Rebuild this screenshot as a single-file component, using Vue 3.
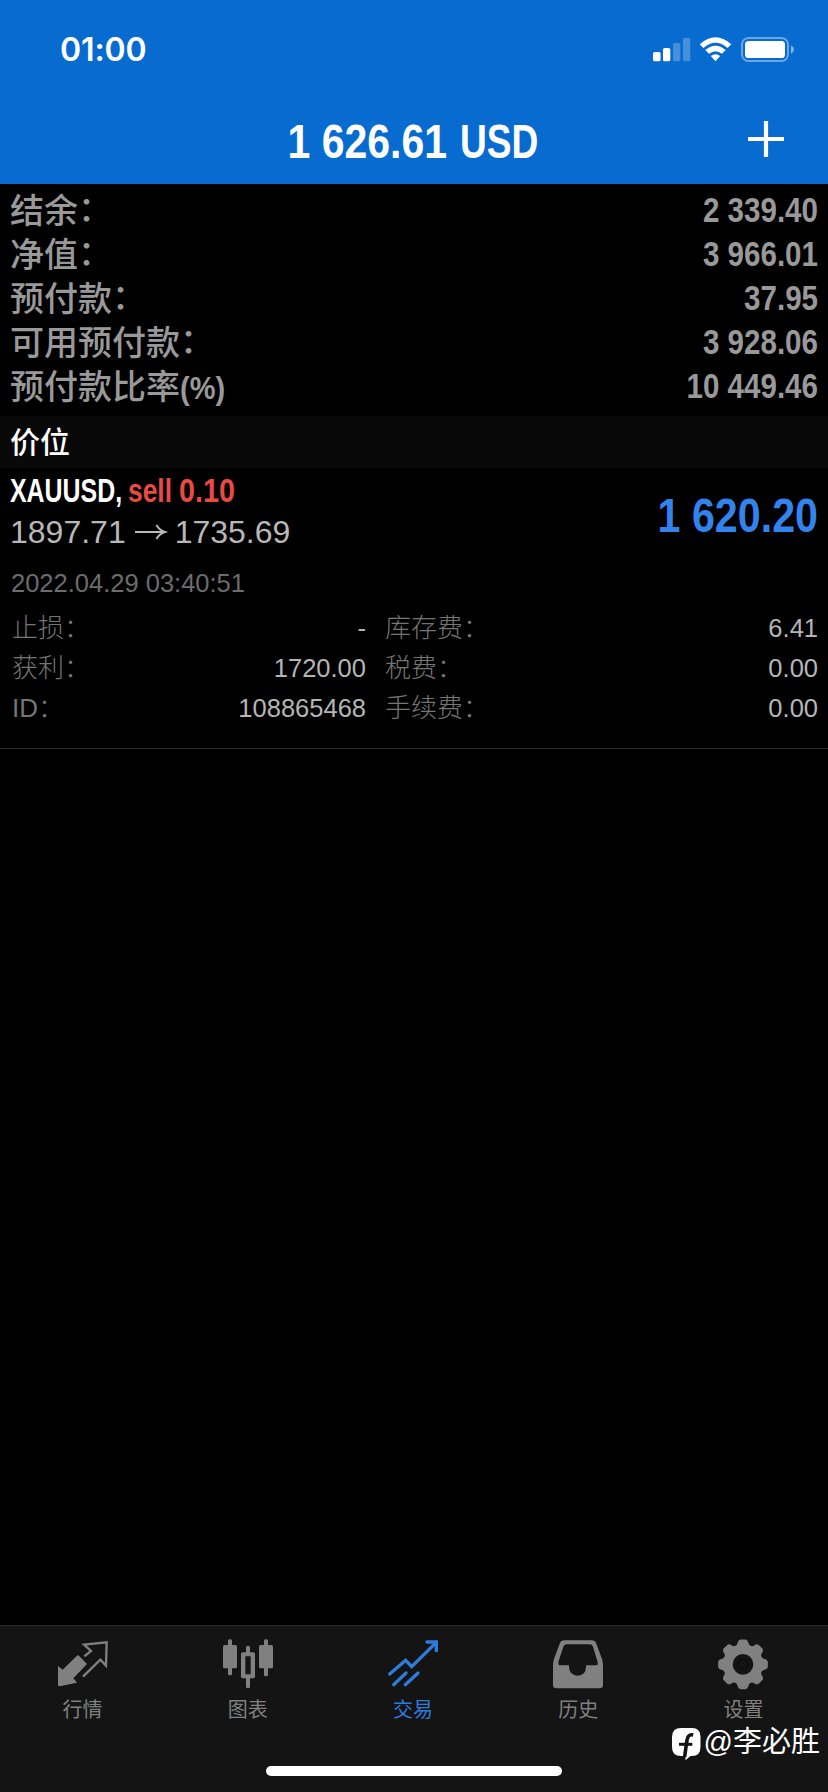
<script setup>
const account = [
  { label: '结余', suffix: '：', value: '2 339.40' },
  { label: '净值', suffix: '：', value: '3 966.01' },
  { label: '预付款', suffix: '：', value: '37.95' },
  { label: '可用预付款', suffix: '：', value: '3 928.06' },
  { label: '预付款比率', unit: '(%)', value: '10 449.46' },
]
const details = [
  ['止损：', '-', '库存费：', '6.41'],
  ['获利：', '1720.00', '税费：', '0.00'],
  ['ID：', '108865468', '手续费：', '0.00'],
]
const tabs = [
  { id: 'quotes', label: '行情' },
  { id: 'chart', label: '图表' },
  { id: 'trade', label: '交易' },
  { id: 'history', label: '历史' },
  { id: 'settings', label: '设置' },
]

// Eight rounded teeth around the centre of a 150-unit box.
function gearPath() {
  const at = (r, deg) => {
    const a = (deg * Math.PI) / 180
    return `${(75 + r * Math.cos(a)).toFixed(1)} ${(76 + r * Math.sin(a)).toFixed(1)}`
  }
  let d = `M${at(60, -22.5)}`
  for (let i = 0; i < 8; i++) {
    const c = i * 45
    d += `Q${at(60, c - 17)} ${at(67, c - 14)}Q${at(75, c - 11)} ${at(75, c - 6)}`
    d += `L${at(75, c + 6)}Q${at(75, c + 11)} ${at(67, c + 14)}Q${at(60, c + 17)} ${at(60, c + 22.5)}`
  }
  return d + 'Z'
}
const gear = gearPath()
</script>

<template>
  <div class="screen">
    <header class="header">
      <div class="status">
        <span class="time">01:00</span>
        <svg class="indicators" width="144" height="30" viewBox="652 35 144 30" fill="#fff">
          <rect x="653" y="52" width="7.5" height="9.3" rx="1.6" />
          <rect x="663" y="48" width="7.3" height="13.3" rx="1.6" />
          <g opacity=".25"><rect x="673" y="43" width="7.3" height="18.3" rx="1.6" /><rect x="683" y="38" width="7.3" height="23.3" rx="1.6" /></g>
          <path d="M699.7 44.2Q715.5 30.2 731.3 44.2L727.6 48Q715.5 37.3 703.4 48Z" />
          <path d="M705.3 50Q715.5 41.4 725.7 50L722 53.8Q715.5 48.6 709 53.8Z" />
          <path d="M710.8 56.1Q715.5 52.2 720.2 56.1L715.5 61.2Z" />
          <rect x="742" y="38" width="46" height="23" rx="6.5" fill="none" stroke="#fff" stroke-opacity=".4" stroke-width="2" />
          <rect x="745" y="41" width="40" height="17" rx="3.6" />
          <path d="M791 45.5Q794 47 794 49.5T791 53.8Z" opacity=".5" />
        </svg>
      </div>
      <div class="nav">
        <svg class="title condensed" width="256" height="50">
          <text transform="translate(1.5 42) scale(.845 1)">1 626.61</text>
          <text transform="translate(174 42) scale(.765 1)">USD</text>
        </svg>
        <svg class="plus" width="36" height="36" viewBox="0 0 36 36"><path d="M0 18H36M18 0V36" stroke="#fff" stroke-width="4.2" /></svg>
      </div>
    </header>

    <section class="account">
      <div v-for="row in account" :key="row.label" class="account-row">
        <div class="label">{{ row.label }}<span v-if="row.suffix" class="colon">{{ row.suffix }}</span><span v-if="row.unit" class="unit">{{ row.unit }}</span></div>
        <svg class="condensed amount" width="140" height="44">
          <text transform="translate(140 34) scale(.857 1)" text-anchor="end">{{ row.value }}</text>
        </svg>
      </div>
    </section>

    <h2 class="band">价位</h2>

    <section class="position">
      <div class="summary">
        <div>
          <svg class="condensed symbol" width="240" height="42">
            <text transform="translate(0 34) scale(.755 1)" fill="#fff">XAUUSD,</text>
            <text transform="translate(118 34) scale(.8 1)" fill="#e94b43">sell</text>
            <text transform="translate(169 34) scale(.87 1)" fill="#e94b43">0.10</text>
          </svg>
          <div class="prices">
            <span>1897.71</span>
            <svg width="31" height="18" viewBox="0 0 31 18" fill="none" stroke="#b8b8b8" stroke-width="2"><path d="M0 9H29.5M21.5 2Q24 7 30 9Q24 11 21.5 16" /></svg>
            <span>1735.69</span>
          </div>
        </div>
        <svg class="condensed profit" width="170" height="50">
          <text transform="translate(170 42) scale(.85 1)" text-anchor="end">1 620.20</text>
        </svg>
      </div>
      <div class="date">2022.04.29 03:40:51</div>
      <div class="details">
        <div v-for="row in details" :key="row[0]" class="detail-row">
          <div class="pair"><span class="key">{{ row[0] }}</span><span>{{ row[1] }}</span></div>
          <div class="pair"><span class="key">{{ row[2] }}</span><span>{{ row[3] }}</span></div>
        </div>
      </div>
    </section>

    <footer class="tabbar">
      <nav class="tabs">
        <div v-for="tab in tabs" :key="tab.id" class="tab" :class="{ active: tab.id === 'trade' }">
          <svg width="50" height="50" viewBox="0 0 150 150" fill="currentColor">
            <g v-if="tab.id === 'quotes'">
              <path d="M0 81L14 92L56 51Q60 47 64 51L87 75L46 118L57 131L5 142Q0 142 0 138Z" />
              <path d="M79 52L99 36L78 17L146 10L144 80L127 62L75 113" fill="none" stroke="currentColor" stroke-width="7" />
            </g>
            <g v-else-if="tab.id === 'chart'">
              <rect x="15" y="1" width="12" height="108" rx="5" /><rect x="0" y="18" width="42" height="70" rx="5" />
              <rect x="123" y="1" width="12" height="111" rx="5" /><rect x="108" y="18" width="42" height="70" rx="5" />
              <path d="M69 25Q69 20 75 20T81 25V40H91Q96 40 96 45V113Q96 118 91 118H81V143Q81 148 75 148T69 143V118H59Q54 118 54 113V45Q54 40 59 40H69ZM67 52V106H83V52Z" fill-rule="evenodd" />
            </g>
            <g v-else-if="tab.id === 'trade'" fill="none" stroke="currentColor" stroke-width="10" stroke-linecap="round">
              <path d="M5 105L53 64L71 83L142 13" stroke-linejoin="miter" />
              <path d="M117 9H145V35" />
              <path d="M17 137L54 102M52 137L90 102" />
            </g>
            <path v-else-if="tab.id === 'history'" fill-rule="evenodd" d="M35 4H116Q126 4 130 14L147 60Q150 69 150 79V138Q150 148 140 148H10Q0 148 0 138V79Q0 69 3 60L20 14Q24 4 35 4ZM41 16Q34 16 31 23L17 66Q14 79 21 79H48V84Q50 110 74 110T99 84V79H130Q137 79 133 66L120 23Q117 16 110 16Z" />
            <g v-else>
              <path fill-rule="evenodd" :d="gear + 'M44 76a31 31 0 1 0 62 0a31 31 0 1 0-62 0Z'" />
              <circle cx="75" cy="76" r="15" fill="none" stroke="#0b0b0b" stroke-width="4" />
            </g>
          </svg>
          <span>{{ tab.label }}</span>
        </div>
      </nav>
      <div class="home-bar"></div>
      <div class="watermark">
        <svg width="29" height="33" viewBox="0 0 29 33">
          <path d="M9 0H20Q28.5 0 28.5 9V19Q28.5 28 20 28H18.5L13.5 32.3V28H9Q0 28 0 19V9Q0 0 9 0Z" fill="#fff" />
          <path d="M21.2 7C17 6 15.6 8.5 14.9 12.5L12.6 29" fill="none" stroke="#141414" stroke-width="3.6" />
          <path d="M7 16.3H20.3" stroke="#141414" stroke-width="3" />
        </svg>
        <span>@李必胜</span>
      </div>
    </footer>
  </div>
</template>

<style>
body { background: #000; }
</style>

<style scoped>
.screen {
  width: 828px;
  height: 1792px;
  display: flex;
  flex-direction: column;
  background: #000;
  color: #fff;
  font-family: "Liberation Sans", "Noto Sans CJK SC", sans-serif;
  overflow: hidden;
}
svg { display: block; flex: none; overflow: visible; }
.header { height: 184px; background: #086bd0; flex: none; }
.status {
  height: 100px;
  box-sizing: border-box;
  padding: 30px 32px 0 60px;
  display: flex;
  justify-content: space-between;
  align-items: flex-start;
}
.time { font: 600 32px/40px Inter, sans-serif; letter-spacing: -.1px; }
.indicators { margin-top: 5px; }
.nav {
  height: 84px;
  box-sizing: border-box;
  padding: 16px 44px 0 286px;
  display: flex;
  justify-content: space-between;
}
.plus { margin-top: 5px; }
.condensed { font-family: "Liberation Sans", sans-serif; font-weight: 700; }
.title { font-size: 48.5px; fill: #fff; }
.account { padding: 4px 10px 8px; color: #999; }
.account-row {
  height: 44px;
  display: flex;
  justify-content: space-between;
  font-weight: 500;
  font-size: 34px;
}
.label { line-height: 46px; }
.colon { line-height: 0; vertical-align: 2px; }
.unit { display: inline-block; line-height: 40px; font-weight: 700; font-size: 31.5px; transform: scaleX(.92); transform-origin: left; }
.amount { font-size: 34.5px; fill: #999; }
.band {
  margin: 0;
  height: 52px;
  padding-left: 10px;
  background: #080808;
  font-weight: 500;
  font-size: 30px;
  line-height: 54px;
}
.position { height: 280px; border-bottom: 1px solid #292929; }
.summary { height: 84px; padding: 0 10px; display: flex; justify-content: space-between; }
.symbol { font-size: 33px; }
.prices { display: flex; align-items: center; height: 44px; font-size: 32px; color: #b8b8b8; }
.prices svg { margin: 0 9px; }
.profit { margin-top: 22px; font-size: 48.5px; fill: #3383ed; }
.date { height: 56px; padding-left: 11px; font-size: 25.5px; line-height: 62px; color: #6c6c6c; }
.details { padding: 0 10px 0 12px; }
.detail-row {
  height: 40px;
  display: grid;
  grid-template-columns: 354px 1fr;
  column-gap: 19px;
  font-size: 25.5px;
  line-height: 40px;
  color: #b5b5b5;
}
.pair { display: flex; justify-content: space-between; }
.key { font-weight: 300; font-size: 26px; line-height: 41px; color: #757575; }
.tabbar {
  position: relative;
  margin-top: auto;
  height: 167px;
  box-sizing: border-box;
  background: #141414;
  border-top: 1px solid #2a2a2a;
  flex: none;
}
.tabs { display: grid; grid-template-columns: repeat(5, 1fr); padding: 13px 2px 0 0; }
.tab {
  display: flex;
  flex-direction: column;
  align-items: center;
  color: #808080;
  font: 400 20px/39px "Noto Sans CJK SC", sans-serif;
}
.tab.active { color: #2d7cdb; }
.home-bar {
  position: absolute;
  left: 266px;
  bottom: 16px;
  width: 296px;
  height: 10px;
  border-radius: 5px;
  background: #fff;
}
.watermark {
  position: absolute;
  right: 8px;
  top: 95px;
  height: 40px;
  display: flex;
  gap: 3px;
  font-size: 29px;
  line-height: 42px;
}
.watermark svg { margin-top: 7px; }
</style>
